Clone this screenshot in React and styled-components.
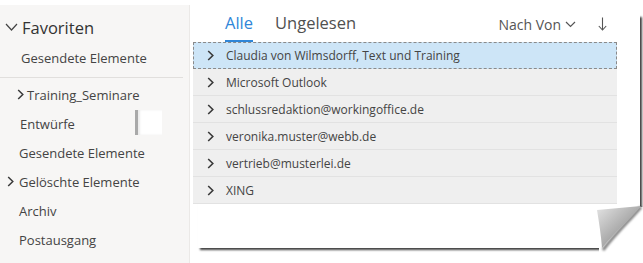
import React from 'react';
import styled, { createGlobalStyle } from 'styled-components';

const Global = createGlobalStyle`
  html, body { margin: 0; padding: 0; background: #fff; }
  body { font-family: "Open Sans", "Noto Sans", sans-serif; }
  #root { width: 643px; height: 263px; overflow: hidden; }
`;

const Canvas = styled.div`
  display: flex;
  align-items: flex-start;
  width: 643px;
  height: 263px;
  background: #fff;
`;

const Sidebar = styled.nav`
  width: 189px;
  height: 258px;
  margin-top: 5px;
  background: #f7f6f5;
  border-right: 1px solid #ebe9e7;
  display: flex;
  flex-direction: column;
`;

const FavHeader = styled.div`
  display: flex;
  align-items: center;
  gap: 2px;
  height: 38px;
  padding: 6px 0 0 5px;
  box-sizing: border-box;
  font-size: 16.5px;
  color: #333;
`;

const FolderItem = styled.div`
  display: flex;
  align-items: center;
  height: 29px;
  flex-shrink: 0;
  padding-left: ${(p) => p.$indent}px;
  font-size: 13px;
  color: #444;
  white-space: nowrap;
`;

const Caret = styled.svg`
  width: ${(p) => p.$w || 6}px;
  height: ${(p) => p.$h || 10}px;
  margin-right: ${(p) => p.$gap || 0}px;
  flex-shrink: 0;
`;

const Divider = styled.div`
  height: 1px;
  background: #e1dfdd;
  margin: 5px 6px 2px 0;
  flex-shrink: 0;
`;

const ToggleStub = styled.div`
  margin-left: auto;
  margin-right: 27px;
  align-self: flex-start;
  margin-top: 1px;
  width: 24px;
  height: 25px;
  background: #fff;
  border-left: 3px solid #a9a9a9;
  box-shadow: inset 2px 0 2px rgba(0, 0, 0, 0.08);
`;

const Paper = styled.main`
  position: relative;
  width: 450px;
  height: 248px;
  background: #fff;
  &::before {
    content: '';
    position: absolute;
    left: 8px;
    top: 15px;
    right: 0;
    bottom: 0;
    box-shadow: 2px 2px 2px rgba(0, 0, 0, 0.75);
  }
`;

const Header = styled.header`
  position: relative;
  display: flex;
  align-items: stretch;
  height: 42px;
  padding: 0 33px 0 35px;
  box-sizing: border-box;
  background: #fff;
`;

const Tab = styled.div`
  display: flex;
  align-items: center;
  padding-top: 4px;
  margin-right: 22px;
  box-sizing: border-box;
  font-size: 16.5px;
  color: ${(p) => (p.$active ? '#2f86d8' : '#505050')};
  border-bottom: 2px solid ${(p) => (p.$active ? '#2f86d8' : 'transparent')};
`;

const Sort = styled.div`
  margin-left: auto;
  display: flex;
  align-items: center;
  padding-top: 6px;
  font-size: 14px;
  color: #555;
`;

const SortArrow = styled.svg`
  width: 9px;
  height: 14px;
  margin-left: 22px;
`;

const List = styled.div`
  position: relative;
  margin-left: 3px;
  width: 424px;
  display: flex;
  flex-direction: column;
`;

const Row = styled.div`
  display: flex;
  align-items: center;
  gap: 12px;
  height: 27px;
  padding-left: 14px;
  box-sizing: border-box;
  font-size: 12px;
  color: #444;
  white-space: nowrap;
  background: ${(p) => (p.$selected ? '#cde5f7' : '#efefef')};
  border-bottom: 1px solid ${(p) => (p.$selected ? 'transparent' : '#e2e2e2')};
  outline: ${(p) => (p.$selected ? '1px dashed #8a8a8a' : 'none')};
  outline-offset: -1px;
`;

const Curl = styled.svg`
  position: absolute;
  left: 402px;
  top: 205px;
  width: 51px;
  height: 53px;
  overflow: visible;
`;

const RightCaret = ({ gap, big }) => (
  <Caret viewBox="0 0 7 11" $w={7} $h={11} $gap={gap}>
    <path d="M1.2 1 L5.8 5.5 L1.2 10" fill="none" stroke="#3a3a3a" strokeWidth={big ? 1.6 : 1.5} />
  </Caret>
);

const mails = [
  'Claudia von Wilmsdorff, Text und Training',
  'Microsoft Outlook',
  'schlussredaktion@workingoffice.de',
  'veronika.muster@webb.de',
  'vertrieb@musterlei.de',
  'XING',
];

export default function App() {
  return (
    <>
      <Global />
      <Canvas>
        <Sidebar>
          <FavHeader>
            <Caret viewBox="0 0 13 8" $w={13} $h={8} $gap={2}>
              <path d="M1 1 L6.5 7 L12 1" fill="none" stroke="#444" strokeWidth="1.2" />
            </Caret>
            Favoriten
          </FavHeader>
          <FolderItem $indent={21}>Gesendete Elemente</FolderItem>
          <Divider />
          <FolderItem $indent={17}>
            <RightCaret gap={3} />
            Training_Seminare
          </FolderItem>
          <FolderItem $indent={20}>
            Entwürfe
            <ToggleStub />
          </FolderItem>
          <FolderItem $indent={19}>Gesendete Elemente</FolderItem>
          <FolderItem $indent={7}>
            <RightCaret gap={5} />
            Gelöschte Elemente
          </FolderItem>
          <FolderItem $indent={19}>Archiv</FolderItem>
          <FolderItem $indent={19}>Postausgang</FolderItem>
        </Sidebar>
        <Paper>
          <Header>
            <Tab $active>Alle</Tab>
            <Tab>Ungelesen</Tab>
            <Sort>
              Nach Von
              <Caret viewBox="0 0 11 7" $w={11} $h={7} style={{ marginLeft: 4 }}>
                <path d="M1 1 L5.5 5.5 L10 1" fill="none" stroke="#555" strokeWidth="1.2" />
              </Caret>
              <SortArrow viewBox="0 0 9 14">
                <path d="M4.5 0.5 V13 M0.8 9 L4.5 13 L8.2 9" fill="none" stroke="#555" strokeWidth="1.1" />
              </SortArrow>
            </Sort>
          </Header>
          <List>
            {mails.map((m, i) => (
              <Row key={m} $selected={i === 0}>
                <RightCaret big />
                {m}
              </Row>
            ))}
          </List>
          <Curl viewBox="0 0 51 53">
            <defs>
              <linearGradient id="curlg" x1="0" y1="0" x2="1" y2="1">
                <stop offset="0" stopColor="#e4e4e4" />
                <stop offset="0.55" stopColor="#a8a8a8" />
                <stop offset="1" stopColor="#6e6e6e" />
              </linearGradient>
              <filter id="blur" x="-20%" y="-20%" width="140%" height="140%">
                <feGaussianBlur stdDeviation="1" />
              </filter>
            </defs>
            <rect x="10" y="2" width="43" height="52" fill="#fff" />
            <rect x="7" y="42" width="46" height="12" fill="#fff" />
            <path d="M49 2 C38 15 23 29 11 45" fill="none" stroke="rgba(0,0,0,0.5)" strokeWidth="3" filter="url(#blur)" />
            <path d="M5 5 L49 1 C38 14 22 28 10 43 C9 30 7 17 5 5 Z" fill="url(#curlg)" />
          </Curl>
        </Paper>
      </Canvas>
    </>
  );
}
